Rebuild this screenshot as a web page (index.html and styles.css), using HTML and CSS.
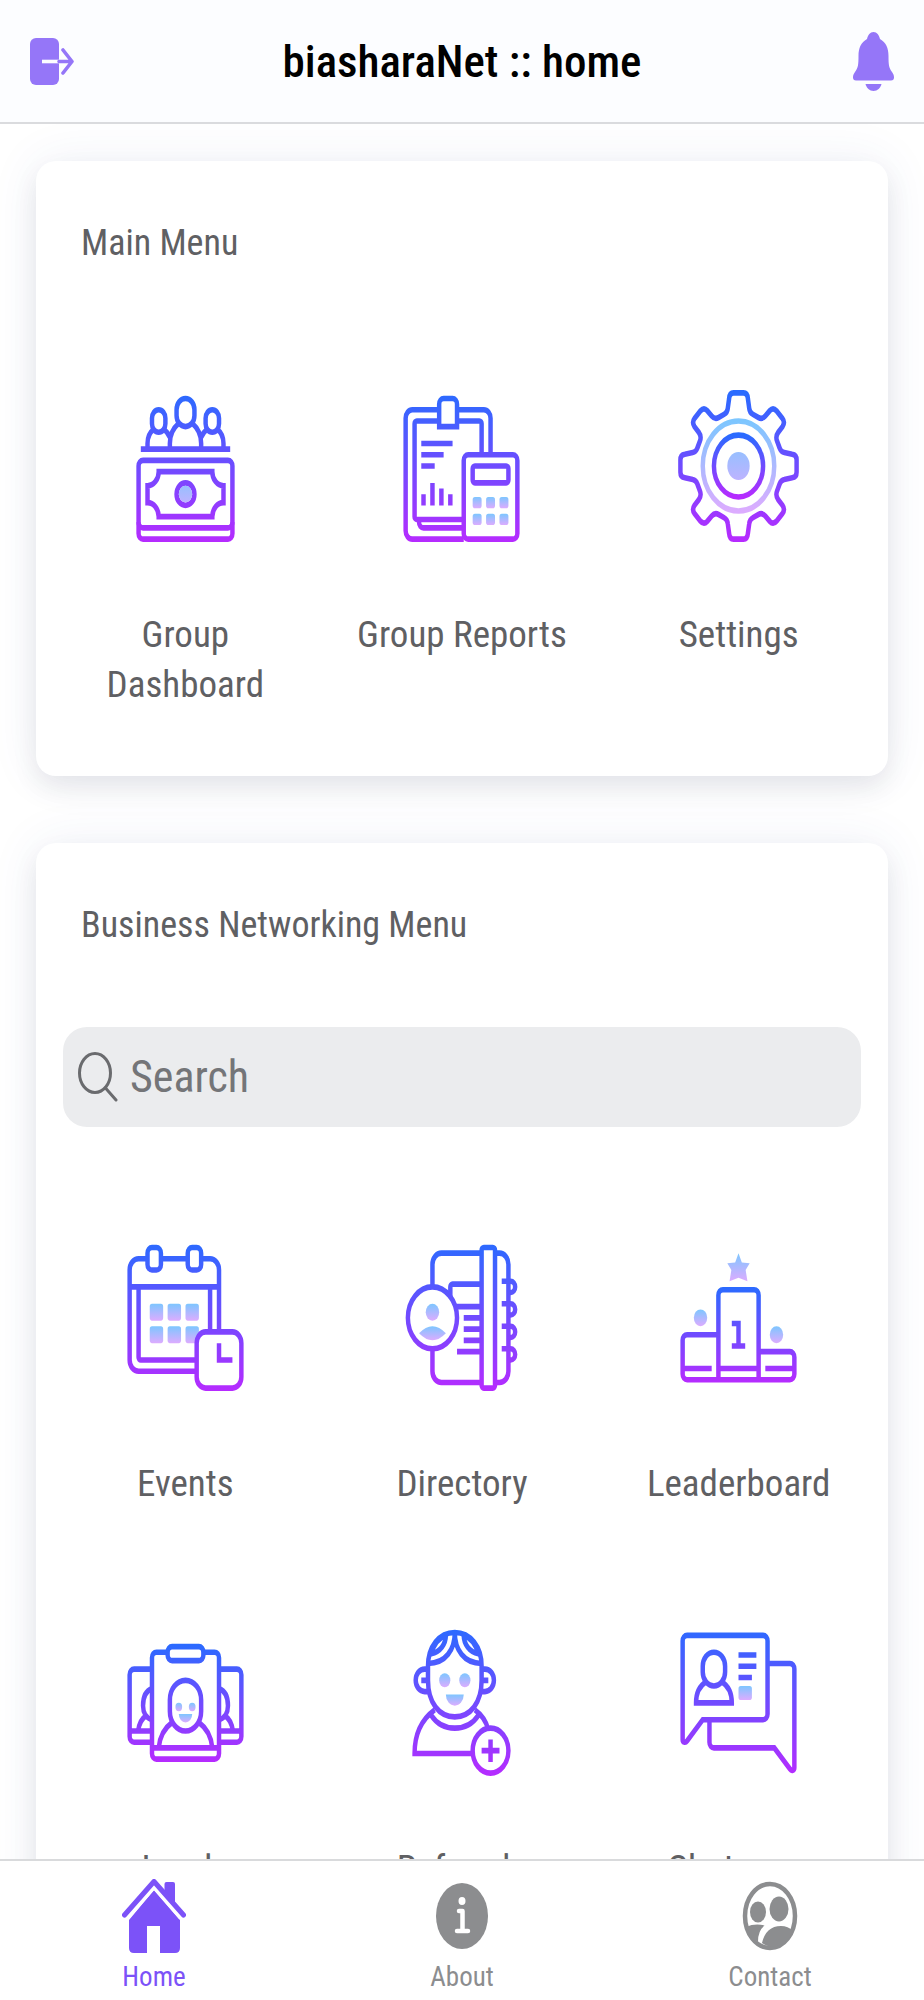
FILE: index.html
```html
<!DOCTYPE html>
<html lang="en">
<head>
    <meta charset="UTF-8">
    <meta name="viewport" content="width=device-width, initial-scale=1.0">
    <title>biasharaNet :: home</title>
    <link rel="stylesheet" href="styles.css">
</head>
<body>

<!-- shared gradients for the menu icons -->
<svg class="defs" aria-hidden="true">
    <defs>
        <linearGradient id="line" gradientUnits="userSpaceOnUse" x1="0" y1="6" x2="0" y2="59">
            <stop offset="0" stop-color="#2a6bff"/>
            <stop offset="1" stop-color="#b62bff"/>
        </linearGradient>
        <linearGradient id="line-low" gradientUnits="userSpaceOnUse" x1="0" y1="22" x2="0" y2="56">
            <stop offset="0" stop-color="#2a6bff"/>
            <stop offset="1" stop-color="#b62bff"/>
        </linearGradient>
        <linearGradient id="line-mid" gradientUnits="userSpaceOnUse" x1="0" y1="12" x2="0" y2="54">
            <stop offset="0" stop-color="#2a6bff"/>
            <stop offset="1" stop-color="#b62bff"/>
        </linearGradient>
        <linearGradient id="gear" x1="0" y1="0" x2="0" y2="1">
            <stop offset="0" stop-color="#2a6bff"/>
            <stop offset="1" stop-color="#b62bff"/>
        </linearGradient>
        <linearGradient id="soft" x1="0" y1="0" x2="0" y2="1">
            <stop offset="0" stop-color="#7dc6ff"/>
            <stop offset="1" stop-color="#dcacff"/>
        </linearGradient>
        <linearGradient id="soft-dot" x1="0" y1="0" x2="0" y2="1">
            <stop offset="0" stop-color="#98bfff"/>
            <stop offset="1" stop-color="#bdb3ff"/>
        </linearGradient>
    </defs>
</svg>

<header class="navbar">
    <a href="#" class="nav-icon" aria-label="Log out">
        <svg class="icon-logout" viewBox="0 0 44 47" preserveAspectRatio="none">
            <path d="M6 0h17a6 6 0 0 1 6 6v35a6 6 0 0 1-6 6H6a6 6 0 0 1-6-6V6a6 6 0 0 1 6-6z" fill="#9576f8"/>
            <path d="M12 23.500h17" stroke="#fcfdff" stroke-width="3.600"/>
            <path d="M29 23.500h12M33 12l9 11.500-9 11.500" fill="none" stroke="#9576f8" stroke-width="3.600" stroke-linecap="round" stroke-linejoin="round"/>
        </svg>
    </a>
    <h1 class="title">biasharaNet :: home</h1>
    <a href="#" class="nav-icon" aria-label="Notifications">
        <svg class="icon-bell" viewBox="0 0 41 59" preserveAspectRatio="none">
            <path d="M20.500 0c3.500 0 5.500 3 6.500 7 6 3.500 8.500 9 8.500 17 0 9 .5 12 3.500 16 1.500 2 2 3.500 2 5.500 0 2-1 3-3 3H3c-2 0-3-1-3-3 0-2 .5-3.500 2-5.500 3-4 3.500-7 3.500-16 0-8 2.500-13.500 8.500-17 1-4 3-7 6.500-7z" fill="#9576f8"/>
            <path d="M12.500 52h16c-1 4-4 7-8 7s-7-3-8-7z" fill="#9576f8"/>
        </svg>
    </a>
</header>

<main class="content">
    <section class="card">
        <h2 class="card-title">Main Menu</h2>
        <div class="menu">
            <a href="#" class="menu-item">
                <svg class="menu-icon" viewBox="0 0 64 64" preserveAspectRatio="none">
                    <g fill="none" stroke="url(#line)" stroke-width="2">
                        <rect x="28" y="8" width="8" height="10" rx="4"/>
                        <rect x="17" y="12" width="6" height="8" rx="3"/>
                        <rect x="41" y="12" width="6" height="8" rx="3"/>
                        <path d="M25 26v-2c0-3 1.500-5.500 4-7.200M39 26v-2c0-3-1.500-5.500-4-7.200M15 26v-2c0-2.500 1-4 3-5.200M49 26v-2c0-2.500-1-4-3-5.200M22 18.800c1.300.7 2.400 1.700 3 3M42 18.800c-1.300.7-2.400 1.700-3 3"/>
                        <path d="M12 26.010L52 26"/>
                        <rect x="11" y="30" width="42" height="28" rx="2"/>
                        <path d="M11 52a2 2 0 0 0 2 2h38a2 2 0 0 0 2-2"/>
                        <path d="M20 34h24a5 5 0 0 0 5 5v6a5 5 0 0 0-5 5H20a5 5 0 0 0-5-5v-6a5 5 0 0 0 5-5z"/>
                        <circle cx="32" cy="42" r="4"/>
                    </g>
                    <circle cx="32" cy="42" r="3" fill="url(#soft-dot)"/>
                </svg>
                <span class="menu-label">Group Dashboard</span>
            </a>
            <a href="#" class="menu-item">
                <svg class="menu-icon" viewBox="0 0 64 64" preserveAspectRatio="none">
                    <g fill="none" stroke="url(#line)" stroke-width="2">
                        <path d="M22 12H10a3 3 0 0 0-3 3v40a3 3 0 0 0 3 3h23M30 12h12a3 3 0 0 1 3 3v13"/>
                        <path d="M22 16H12a1 1 0 0 0-1 1v33a1 1 0 0 0 1 1h21M30 16h10a1 1 0 0 1 1 1v11M13 51v1a2 2 0 0 0 2 2h18"/>
                        <path d="M22 18v-8a2 2 0 0 1 2-2h4a2 2 0 0 1 2 2v8z"/>
                        <path d="M14 24h14M14 28h10M14 32h6M15 42v4M19 38v8M23 40v6M27 42v4"/>
                        <rect x="33" y="28" width="24" height="30" rx="2"/>
                        <rect x="37" y="32" width="16" height="6" rx="1"/>
                    </g>
                    <g fill="url(#soft)">
                        <rect x="37" y="43" width="4" height="4" rx="1"/>
                        <rect x="43" y="43" width="4" height="4" rx="1"/>
                        <rect x="49" y="43" width="4" height="4" rx="1"/>
                        <rect x="37" y="49" width="4" height="4" rx="1"/>
                        <rect x="43" y="49" width="4" height="4" rx="1"/>
                        <rect x="49" y="49" width="4" height="4" rx="1"/>
                    </g>
                </svg>
                <span class="menu-label">Group Reports</span>
            </a>
            <a href="#" class="menu-item">
                <svg class="menu-icon" viewBox="-32 -32 64 64" preserveAspectRatio="none">
                    <g fill="none" stroke-width="2">
                        <path stroke="url(#gear)" d="M2.200-26Q4-26 4.200-24L4.800-20.500Q5-19 6.400-18.400L9-17.200Q10.600-16.500 12-17.800L14-19.700Q15.500-21 17-19.600L19.600-17Q21-15.500 19.700-14L17.800-12Q16.500-10.600 17.200-9L18.400-6.400Q19-5 20.500-4.800L24-4.200Q26-4 26-2.200V2.200Q26 4 24 4.200L20.500 4.800Q19 5 18.400 6.400L17.200 9Q16.500 10.600 17.800 12L19.700 14Q21 15.500 19.600 17L17 19.600Q15.500 21 14 19.700L12 17.800Q10.600 16.500 9 17.200L6.400 18.400Q5 19 4.800 20.500L4.200 24Q4 26 2.200 26H-2.200Q-4 26-4.200 24L-4.800 20.500Q-5 19-6.400 18.400L-9 17.200Q-10.600 16.500-12 17.800L-14 19.700Q-15.500 21-17 19.600L-19.600 17Q-21 15.500-19.700 14L-17.800 12Q-16.500 10.600-17.200 9L-18.400 6.400Q-19 5-20.500 4.800L-24 4.200Q-26 4-26 2.200V-2.200Q-26-4-24-4.200L-20.500-4.800Q-19-5-18.400-6.400L-17.200-9Q-16.500-10.600-17.800-12L-19.700-14Q-21-15.500-19.600-17L-17-19.600Q-15.500-21-14-19.700L-12-17.800Q-10.600-16.500-9-17.200L-6.400-18.400Q-5-19-4.800-20.500L-4.200-24Q-4-26-2.200-26z"/>
                        <circle r="16" stroke="url(#soft)"/>
                        <circle r="11" stroke="url(#gear)"/>
                    </g>
                    <circle r="5" fill="url(#soft-dot)"/>
                </svg>
                <span class="menu-label">Settings</span>
            </a>
        </div>
    </section>

    <section class="card">
        <h2 class="card-title">Business Networking Menu</h2>
        <label class="search">
            <svg class="icon-search" viewBox="0 0 40 50" preserveAspectRatio="none">
                <ellipse cx="17" cy="21" rx="15.500" ry="19.500"/>
                <path d="M27.500 36L38 48"/>
            </svg>
            <input type="search" class="search-input" placeholder="Search" aria-label="Search">
        </label>
        <div class="menu">
            <a href="#" class="menu-item">
                <svg class="menu-icon" viewBox="0 0 64 64" preserveAspectRatio="none">
                    <g fill="url(#soft)">
                        <rect x="16" y="28" width="6" height="6" rx="1"/>
                        <rect x="24" y="28" width="6" height="6" rx="1"/>
                        <rect x="32" y="28" width="6" height="6" rx="1"/>
                        <rect x="16" y="36" width="6" height="6" rx="1"/>
                        <rect x="24" y="36" width="6" height="6" rx="1"/>
                        <rect x="32" y="36" width="6" height="6" rx="1"/>
                    </g>
                    <g fill="none" stroke="url(#line)" stroke-width="2">
                        <rect x="7" y="12" width="40" height="40" rx="4"/>
                        <path d="M7 22.010L47 22M11 22v25a1 1 0 0 0 1 1h25M43 22v16"/>
                        <rect x="15" y="8" width="6" height="8" rx="2" fill="#fff"/>
                        <rect x="33" y="8" width="6" height="8" rx="2" fill="#fff"/>
                        <rect x="37" y="38" width="20" height="20" rx="4" fill="#fff"/>
                        <path d="M47 42v6h6"/>
                    </g>
                </svg>
                <span class="menu-label">Events</span>
            </a>
            <a href="#" class="menu-item">
                <svg class="menu-icon" viewBox="0 0 64 64" preserveAspectRatio="none">
                    <g fill="none" stroke="url(#line)" stroke-width="2">
                        <path d="M41 10H23a4 4 0 0 0-4 4v8M41 56H23a4 4 0 0 1-4-4v-8M47 10h2a4 4 0 0 1 4 4v38a4 4 0 0 1-4 4h-2"/>
                        <path d="M41 21H28a1 1 0 0 0-1 1v4M41 29H29M41 33h-8M41 37h-8M41 41h-8M41 45H30"/>
                        <path d="M50 20h4a2 2 0 0 1 0 4h-1M50 28h4a2 2 0 0 1 0 4h-1M50 36h4a2 2 0 0 1 0 4h-1M50 44h4a2 2 0 0 1 0 4h-1"/>
                        <rect x="41" y="8" width="6" height="50" rx="1"/>
                        <circle cx="19" cy="33" r="11"/>
                    </g>
                    <g fill="url(#soft)">
                        <circle cx="19" cy="31" r="3"/>
                        <path d="M13 38.500q6-5 12 0q-6 5-12 0z"/>
                    </g>
                </svg>
                <span class="menu-label">Directory</span>
            </a>
            <a href="#" class="menu-item">
                <svg class="menu-icon" viewBox="0 0 64 64" preserveAspectRatio="none">
                    <g fill="url(#soft)">
                        <path d="M32 10l1.500 3.300 3.500.3-1.800 2.400.8 4-4-1.200-4 1.200.8-4-1.800-2.400 3.500-.3z"/>
                        <circle cx="15" cy="33" r="3"/>
                        <circle cx="49" cy="39" r="3"/>
                    </g>
                    <g fill="none" stroke="url(#line-low)" stroke-width="2">
                        <path d="M23 55V25a2 2 0 0 1 2-2h14a2 2 0 0 1 2 2v30"/>
                        <path d="M23 39H9a2 2 0 0 0-2 2v12a2 2 0 0 0 2 2h46a2 2 0 0 0 2-2v-6a2 2 0 0 0-2-2H41"/>
                        <path d="M7 51h13M23 51h18M44 51h13M29 35h3v8M29 43h6"/>
                    </g>
                </svg>
                <span class="menu-label">Leaderboard</span>
            </a>
            <a href="#" class="menu-item">
                <svg class="menu-icon" viewBox="0 0 64 64" preserveAspectRatio="none">
                    <g fill="none" stroke="url(#line-mid)" stroke-width="2">
                        <path d="M17 21H9a2 2 0 0 0-2 2v22a2 2 0 0 0 2 2h8M47 21h8a2 2 0 0 1 2 2v22a2 2 0 0 1-2 2h-8M7 43h10M47 43h10"/>
                        <path d="M17 28c-2.700.7-4 3-4 6 0 2.500 1.500 4.500 4 5M47 28c2.700.7 4 3 4 6 0 2.500-1.500 4.500-4 5M14.500 37.500c-2 1-3.300 3-3.700 5.500M49.500 37.500c2 1 3.300 3 3.700 5.500"/>
                        <rect x="17" y="15" width="30" height="38" rx="2"/>
                        <path d="M17 49.010L47 49"/>
                        <rect x="24" y="13" width="16" height="5" rx="2" fill="#fff"/>
                        <rect x="25" y="25" width="14" height="18" rx="7"/>
                        <path d="M26 40c-3.500 2-5.500 5-6 9M38 40c3.500 2 5.500 5 6 9"/>
                    </g>
                    <g fill="url(#soft)">
                        <circle cx="29" cy="34.500" r="1.500"/>
                        <circle cx="35" cy="34.500" r="1.500"/>
                        <path d="M29 37h6a3 3 0 0 1-6 0z"/>
                    </g>
                </svg>
                <span class="menu-label">Leads</span>
            </a>
            <a href="#" class="menu-item">
                <svg class="menu-icon" viewBox="0 0 64 64" preserveAspectRatio="none">
                    <g fill="none" stroke="url(#line)" stroke-width="2">
                        <path d="M17 20c0-7 5-12 12-12s12 5 12 12v5c0 8-5 13-12 13s-12-5-12-13z"/>
                        <path d="M29 8c0 6-4 11-12 11M29 8c0 6 4 11 12 11M25 9c0 3-2.500 6-6.500 6.500 1-3 3-5.500 6.500-6.500zM33 9c0 3 2.500 6 6.500 6.500-1-3-3-5.500-6.500-6.500z"/>
                        <path d="M17 21h-1.500a4 4 0 0 0 0 8H17M14 25h3M41 21h1.500a4 4 0 0 1 0 8H41M44 25h-3"/>
                        <path d="M20 35.500C14 39 11 44 11 51h26M18.500 37.500c5 6 16 6 21 0M38 35.500c3 1.700 5 4 6 7"/>
                        <circle cx="45" cy="50" r="8"/>
                        <path d="M45 46v8M41 50h8"/>
                    </g>
                    <g fill="url(#soft)">
                        <circle cx="24.500" cy="25" r="2.500"/>
                        <circle cx="33.500" cy="25" r="2.500"/>
                        <path d="M25 30h8a4 4 0 0 1-8 0z"/>
                    </g>
                </svg>
                <span class="menu-label">Referrals</span>
            </a>
            <a href="#" class="menu-item">
                <svg class="menu-icon" viewBox="0 0 64 64" preserveAspectRatio="none">
                    <g fill="none" stroke="url(#line)" stroke-width="2">
                        <path d="M9 9a2 2 0 0 0-2 2v35c0 1 1.200 1.400 2 .5L16 39h27a2 2 0 0 0 2-2V11a2 2 0 0 0-2-2z"/>
                        <path d="M45 19h10a2 2 0 0 1 2 2v35c0 1-1.200 1.400-2 .5L48 49H21a2 2 0 0 1-2-2v-8"/>
                        <rect x="16" y="15" width="10" height="12" rx="5"/>
                        <path d="M17.500 25.500c-3 1.500-4.500 4-4.500 7.500h16c0-3.500-1.500-6-4.500-7.500M32 16h8M32 20h8M32 24h6"/>
                    </g>
                    <rect x="32" y="27" width="6" height="5" rx="1" fill="url(#soft)"/>
                </svg>
                <span class="menu-label">Chatroom</span>
            </a>
        </div>
    </section>
</main>

<nav class="tabbar">
    <a href="#" class="tab active">
        <svg class="tab-icon" viewBox="0 0 64 74" preserveAspectRatio="none">
            <path d="M32 11l26 30v28q0 5-5 5H38V47H25v27H12q-5 0-5-5V41z"/>
            <path d="M2.500 37L32 3l29.500 34" fill="none" stroke="#fff" stroke-width="11"/>
            <path d="M42.500 16V5q0-2 2-2h6.500q2 0 2 2v23z"/>
            <path d="M2.500 36L32 2.500l29.500 33.500" fill="none" stroke="currentColor" stroke-width="5" stroke-linecap="round" stroke-linejoin="round"/>
        </svg>
        <span class="tab-label">Home</span>
    </a>
    <a href="#" class="tab">
        <svg class="tab-icon" viewBox="0 0 64 74" preserveAspectRatio="none">
            <ellipse cx="32" cy="37" rx="26" ry="33"/>
            <ellipse cx="32" cy="22" rx="3.500" ry="4" fill="#fff"/>
            <path d="M29 32h3.500v20M27 52h11" fill="none" stroke="#fff" stroke-width="4.500" stroke-linecap="round" stroke-linejoin="round"/>
        </svg>
        <span class="tab-label">About</span>
    </a>
    <a href="#" class="tab">
        <svg class="tab-icon" viewBox="0 0 64 74" preserveAspectRatio="none">
            <ellipse cx="32" cy="37" rx="25" ry="32" fill="none" stroke="currentColor" stroke-width="4.500"/>
            <ellipse cx="20" cy="33" rx="8" ry="10.500"/>
            <ellipse cx="41" cy="30" rx="9.500" ry="12.500"/>
            <path d="M8 48q9-4 18.500-1.500-6.500 5-6.500 16Q11 58 8 48zM55 52q-5-5-12-5-15 0-19 17 8 6 18 2 9-4 13-14z"/>
        </svg>
        <span class="tab-label">Contact</span>
    </a>
</nav>

</body>
</html>
```
FILE: styles.css
```css
* {
    box-sizing: border-box;
}

body {
    font-family: "Roboto Condensed", Roboto, sans-serif;
    margin: 0;
    height: 100vh;
    display: flex;
    flex-direction: column;
    background-color: #fff;
    color: #5f6063;
}

a {
    color: inherit;
    text-decoration: none;
}

svg {
    display: block;
}

.defs {
    position: absolute;
    width: 0;
    height: 0;
}

.navbar {
    flex: none;
    display: flex;
    align-items: center;
    justify-content: space-between;
    height: 124px;
    padding: 0 30px;
    background-color: #fcfdff;
    border-bottom: 2px solid #dadbde;
}

.nav-icon {
    width: 44px;
}

.icon-logout {
    width: 44px;
    height: 47px;
}

.icon-bell {
    width: 41px;
    height: 59px;
    margin-left: auto;
}

.title {
    margin: 0;
    font-size: 45px;
    font-weight: 500;
    color: #000;
}

.content {
    flex: 1;
    min-height: 0;
    overflow: hidden;
    padding: 37px 36px;
}

.card {
    margin-bottom: 67px;
    padding: 57px 11px 66px;
    background-color: #fff;
    border-radius: 20px;
    box-shadow: 0 12px 26px rgba(0, 0, 20, 0.08), 0 0 50px rgba(50, 80, 160, 0.08);
}

.card-title {
    margin: 0 0 84px;
    padding: 0 34px;
    font-size: 36px;
    line-height: 50px;
    font-weight: 400;
}

.search {
    display: flex;
    align-items: center;
    gap: 12px;
    height: 100px;
    margin: -7px 16px 74px;
    padding: 0 15px;
    background-color: #ebecee;
    border-radius: 24px;
}

.icon-search {
    flex: none;
    width: 40px;
    height: 50px;
    fill: none;
    stroke: #6a6b6e;
    stroke-width: 3;
    stroke-linecap: round;
}

.search-input {
    flex: 1;
    min-width: 0;
    border: none;
    outline: none;
    padding: 0;
    background: none;
    font-family: inherit;
    font-size: 44px;
    color: #5f6063;
}

.search-input::placeholder {
    color: #747578;
}

.menu {
    display: grid;
    grid-template-columns: repeat(3, 1fr);
    row-gap: 77px;
}

.menu-item {
    display: flex;
    flex-direction: column;
    align-items: center;
    padding: 24px 30px 0;
}

.menu-icon {
    width: 143px;
    height: 180px;
    margin-bottom: 54px;
}

.menu-label {
    font-size: 37px;
    line-height: 50px;
    text-align: center;
}

.tabbar {
    flex: none;
    display: flex;
    height: 141px;
    padding-top: 18px;
    background-color: #fff;
    border-top: 2px solid #d9dadc;
}

.tab {
    flex: 1;
    display: flex;
    flex-direction: column;
    align-items: center;
    gap: 8px;
    color: #8c8d8f;
}

.tab.active {
    color: #7c52f8;
}

.tab-icon {
    width: 64px;
    height: 74px;
    fill: currentColor;
}

.tab-label {
    font-size: 27px;
    line-height: 32px;
}
```
